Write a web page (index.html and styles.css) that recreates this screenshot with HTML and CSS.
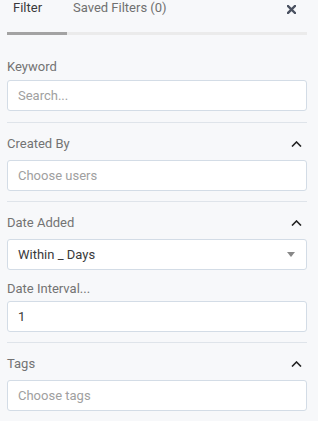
FILE: index.html
```html
<!DOCTYPE html>
<html lang="en">
<head>
  <meta charset="UTF-8">
  <title>Filter</title>
  <link rel="stylesheet" href="styles.css">
</head>
<body>
  <div class="filter-panel">
    <div class="tab-bar">
      <div class="tab active">Filter</div>
      <div class="tab">Saved Filters (0)</div>
      <button class="close-btn" aria-label="Close">
        <svg width="9" height="9" viewBox="0 0 9 9"><path d="M1 1L8 8M8 1L1 8" stroke="#4a5160" stroke-width="2.4" stroke-linecap="square"/></svg>
      </button>
    </div>

    <div class="section first">
      <div class="section-head"><span class="label">Keyword</span></div>
      <input class="field" type="text" placeholder="Search...">
    </div>

    <div class="section">
      <div class="section-head">
        <span class="label">Created By</span>
        <svg class="chevron" width="11" height="6" viewBox="0 0 11 6"><path d="M1 5.5L5.5 1L10 5.5" fill="none" stroke="#222" stroke-width="1.6"/></svg>
      </div>
      <input class="field" type="text" placeholder="Choose users">
    </div>

    <div class="section">
      <div class="section-head">
        <span class="label">Date Added</span>
        <svg class="chevron" width="11" height="6" viewBox="0 0 11 6"><path d="M1 5.5L5.5 1L10 5.5" fill="none" stroke="#222" stroke-width="1.6"/></svg>
      </div>
      <div class="field select">
        <span>Within _ Days</span>
        <svg width="8" height="5" viewBox="0 0 8 5"><path d="M0 0H8L4 5Z" fill="#888"/></svg>
      </div>
      <div class="sub-label">Date Interval...</div>
      <input class="field" type="text" value="1">
    </div>

    <div class="section">
      <div class="section-head">
        <span class="label">Tags</span>
        <svg class="chevron" width="11" height="6" viewBox="0 0 11 6"><path d="M1 5.5L5.5 1L10 5.5" fill="none" stroke="#222" stroke-width="1.6"/></svg>
      </div>
      <input class="field" type="text" placeholder="Choose tags">
    </div>
  </div>
</body>
</html>
```

FILE: styles.css
```css
body {
  margin: 0;
  background-color: #f7f8fa;
  font-family: Roboto, "Liberation Sans", Arial, sans-serif;
  font-size: 13px;
  color: #3a3a3a;
}
.filter-panel {
  width: 300px;
  padding: 0 7px;
}
.tab-bar {
  display: flex;
  align-items: flex-start;
  height: 32px;
  border-bottom: 3px solid #ebebeb;
}
.tab {
  padding: 0 6px;
  line-height: 16px;
  color: #707070;
  height: 32px;
  box-sizing: border-box;
}
.tab.active {
  width: 60px;
  color: #3a3a3a;
  border-bottom: 3px solid #a3a3a3;
  height: 35px;
}
.close-btn {
  margin-left: auto;
  margin-right: 11px;
  margin-top: 5px;
  padding: 0;
  border: none;
  background: none;
  display: flex;
}
.section {
  padding: 10px 0;
  border-top: 1px solid #dfe4ea;
}
.section.first {
  padding-top: 21px;
  padding-bottom: 11px;
  border-top: none;
}
.section.first .section-head {
  margin-bottom: 4px;
}
.section-head {
  display: flex;
  align-items: flex-start;
  justify-content: space-between;
  height: 20px;
  margin-bottom: 7px;
}
.label {
  color: #737373;
  line-height: 22px;
}
.chevron {
  margin-top: 8px;
  margin-right: 5px;
}
.sub-label {
  color: #737373;
  line-height: 16px;
  margin-top: 11px;
  margin-bottom: 4px;
}
.field {
  display: block;
  box-sizing: border-box;
  width: 300px;
  height: 31px;
  padding: 0 10px;
  border: 1px solid #d3dce6;
  border-radius: 3px;
  background-color: #fff;
  font-family: inherit;
  font-size: 13px;
  color: #3a3a3a;
  outline: none;
}
.field::placeholder {
  color: #a0a0a0;
}
.select {
  display: flex;
  align-items: center;
  justify-content: space-between;
  padding-right: 11px;
}
```
